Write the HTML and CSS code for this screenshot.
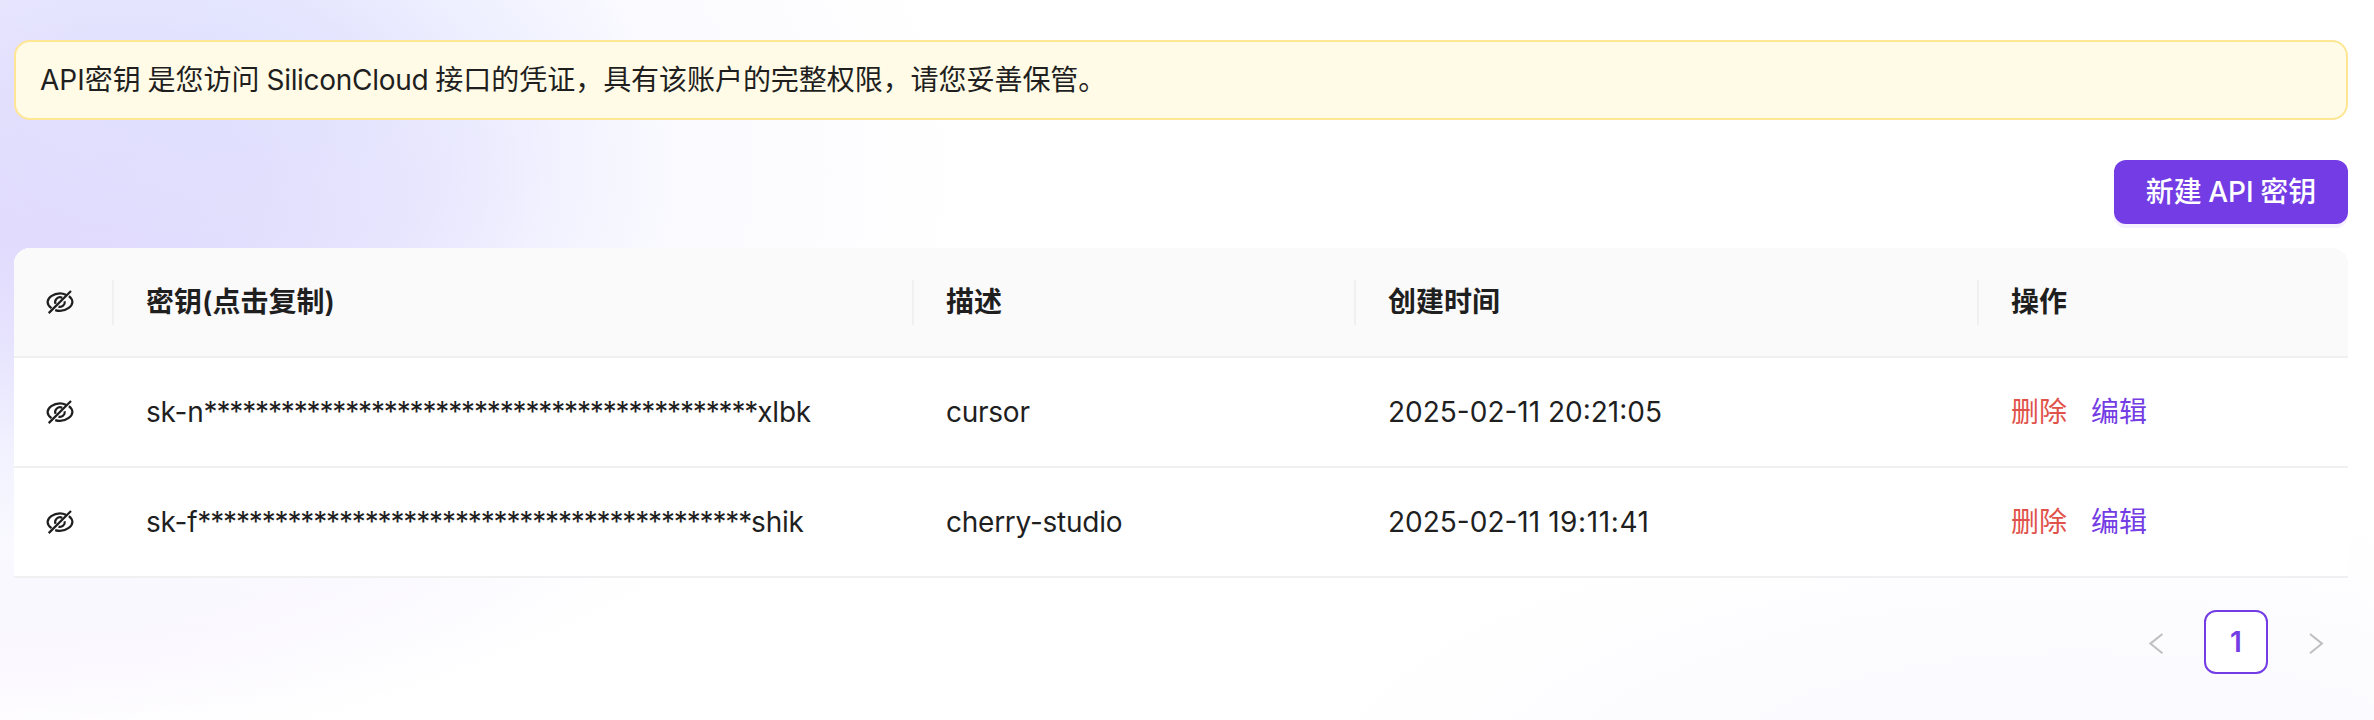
FILE: index.html
```html
<!DOCTYPE html>
<html lang="zh-CN">
<head>
<meta charset="utf-8">
<title>API 密钥</title>
<link rel="stylesheet" href="styles.css">
</head>
<body>
<svg class="sprite" aria-hidden="true">
  <symbol id="eye-off" viewBox="0 0 28 28">
    <path d="M19.8 6.7C18.1 5.8 16.1 5.3 14 5.3C7.2 5.3 1.6 10.2 1.6 14C1.6 16 3.1 18.4 5.5 20.2M9.2 22.1C10.7 22.6 12.3 22.9 14 22.9C20.8 22.9 26.4 18 26.4 14C26.4 12.1 25 9.8 22.9 8.1M16.2 9.8A4.8 4.8 0 0 0 9.5 15.8M18.7 13.2A4.8 4.8 0 0 1 12.5 18.6M2.7 25.1L25 3"/>
  </symbol>
</svg>
<main class="page">
  <div class="alert">API密钥 是您访问 <span class="brand">SiliconCloud</span> 接口的凭证，<span class="pull">具有该账户的完整权限，请您妥善保管。</span></div>
  <div class="toolbar"><button class="create">新建 API 密钥</button></div>
  <div class="table">
    <div class="row head">
      <div class="cell"><svg class="eye"><use href="#eye-off"/></svg></div>
      <div class="cell">密钥(点击复制)</div>
      <div class="cell">描述</div>
      <div class="cell">创建时间</div>
      <div class="cell">操作</div>
    </div>
    <div class="row">
      <div class="cell"><svg class="eye"><use href="#eye-off"/></svg></div>
      <div class="cell key">sk-n<span class="mask">*******************************************</span>xlbk</div>
      <div class="cell name">cursor</div>
      <div class="cell">2025-02-11 20:21:05</div>
      <div class="cell actions"><a class="delete">删除</a><a class="edit">编辑</a></div>
    </div>
    <div class="row">
      <div class="cell"><svg class="eye"><use href="#eye-off"/></svg></div>
      <div class="cell key">sk-f<span class="mask">*******************************************</span>shik</div>
      <div class="cell name">cherry-studio</div>
      <div class="cell time"><span>2025-02-11</span><span class="clock">19:11:41</span></div>
      <div class="cell actions"><a class="delete">删除</a><a class="edit">编辑</a></div>
    </div>
  </div>
  <nav class="pagination">
    <svg class="arrow" viewBox="0 0 24 24"><path d="M18.4 4L6.4 13.6L18.4 23.2"/></svg>
    <span class="current">1</span>
    <svg class="arrow" viewBox="0 0 24 24"><path d="M6 4L18 13.6L6 23.2"/></svg>
  </nav>
</main>
</body>
</html>
```

FILE: styles.css
```css
* { box-sizing: border-box; }
body {
  margin: 0;
  height: 720px;
  overflow: hidden;
  font: 28px/44px Inter, "Noto Sans CJK SC", sans-serif;
  color: #1f1f1f;
  background:
    radial-gradient(ellipse 400px 240px at 230px 60px, rgba(222, 229, 255, .55), rgba(230, 236, 255, .25) 55%, rgba(240, 243, 255, 0)),
    radial-gradient(ellipse 860px 560px at 110px 170px, #dfd8fd 0%, #e1dbfd 18%, #e8e5fe 36%, #f2f2ff 52%, rgba(250, 250, 255, .9) 68%, rgba(255, 255, 255, 0) 100%),
    radial-gradient(ellipse 700px 360px at 0 400px, #f1e6ff, rgba(255, 255, 255, 0)),
    radial-gradient(ellipse 800px 300px at 2080px 800px, #f8f8ff, rgba(255, 255, 255, 0)),
    #fff;
}
.sprite { display: none; }
.page {
  display: flex;
  flex-direction: column;
  padding: 40px 26px 0 14px;
}
.alert {
  height: 80px;
  padding: 16px 24px;
  border: 2px solid #ffe694;
  border-radius: 16px;
  background: #fffbe6;
  word-spacing: -1px;
}
.brand { letter-spacing: -.3px; }
.pull { letter-spacing: -.05px; }
.toolbar {
  display: flex;
  justify-content: flex-end;
  padding: 40px 0 24px;
}
.create {
  width: 234px;
  height: 64px;
  padding: 0;
  border: 0;
  border-radius: 12px;
  font: inherit;
  font-weight: 500;
  word-spacing: -1px;
  color: #fff;
  background: #733ce4;
  box-shadow: 0 4px 0 #f6f0fe;
}
.table {
  border-radius: 16px 16px 0 0;
  overflow: hidden;
  background: #fff;
}
.row {
  display: grid;
  grid-template-columns: 100px 800px 442px 623px 1fr;
  height: 110px;
  border-bottom: 2px solid #f0f0f0;
}
.head { font-weight: 600; background: #fafafa; }
.cell {
  display: flex;
  align-items: center;
  padding: 0 32px;
  white-space: nowrap;
}
.head .cell:not(:last-child) {
  background: linear-gradient(#f0f0f0, #f0f0f0) right center / 2px 45px no-repeat;
}
.key { letter-spacing: -.2px; }
.mask { letter-spacing: -1.15px; }
.name { letter-spacing: -.25px; }
.time { gap: 8px; }
.clock { letter-spacing: .6px; }
.eye {
  flex: none;
  width: 28px;
  height: 28px;
  fill: none;
  stroke: #1f1f1f;
  stroke-width: 2.2;
}
.actions { gap: 24px; }
.delete { color: #e0524a; }
.edit { color: #733ce4; }
.pagination {
  display: flex;
  justify-content: flex-end;
  align-items: center;
  gap: 36px;
  padding: 32px 20px 0 0;
}
.current {
  width: 64px;
  height: 64px;
  border: 2px solid #733ce4;
  border-radius: 12px;
  font-weight: 600;
  line-height: 60px;
  text-align: center;
  color: #733ce4;
  background: #fff;
}
.arrow {
  width: 24px;
  height: 24px;
  fill: none;
  stroke: #bfbfbf;
  stroke-width: 2;
}
```
